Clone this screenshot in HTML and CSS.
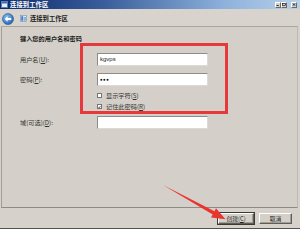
FILE: index.html
```html
<!DOCTYPE html>
<html lang="zh">
<head>
<meta charset="utf-8">
<link rel="stylesheet" href="styles.css">
</head>
<body>
<div class="win">
  <div class="titlebar">
    <svg class="ticon" width="7" height="7" viewBox="0 0 7 7"><rect x="0.5" y="0.5" width="6" height="6" fill="#e8eef8" stroke="#5a7fb8"/><rect x="1" y="1" width="5" height="1.5" fill="#3a6fc0"/></svg>
    <span class="ttext">连接到工作区</span>
    <span class="tbtns">
      <span class="tb"><svg width="5" height="4" viewBox="0 0 5 4"><rect x="0.5" y="3" width="3" height="1" fill="#000"/></svg></span>
      <span class="tb"><svg width="5" height="4" viewBox="0 0 5 4"><rect x="0.5" y="0.5" width="4" height="3" fill="none" stroke="#000" stroke-width="0.8"/></svg></span>
      <span class="tb tb-close"><svg width="5" height="4" viewBox="0 0 5 4"><path d="M0.5 0.3L4.5 3.7M4.5 0.3L0.5 3.7" stroke="#000" stroke-width="0.9"/></svg></span>
    </span>
  </div>
  <div class="nav">
    <svg class="back" width="12" height="12" viewBox="0 0 12 12">
      <defs><radialGradient id="bg" cx="0.4" cy="0.35" r="0.7"><stop offset="0" stop-color="#8cc4f4"/><stop offset="1" stop-color="#1e5fb4"/></radialGradient></defs>
      <circle cx="6" cy="6" r="5.5" fill="url(#bg)" stroke="#2a4f88" stroke-width="0.6"/>
      <path d="M2.6 6L5.6 3.2V4.9H9.2V7.1H5.6V8.8Z" fill="#fff"/>
    </svg>
    <svg class="nicon" width="7" height="7" viewBox="0 0 7 7"><rect x="0.5" y="0.5" width="6" height="6" fill="#dde6f2" stroke="#6f8fb8" stroke-width="0.6"/><rect x="1.2" y="1.2" width="2" height="4.6" fill="#4a80c8"/><rect x="3.8" y="2" width="2.2" height="3.8" fill="#8fb2de"/></svg>
    <span class="ntext">连接到工作区</span>
  </div>
  <div class="panel">
    <div class="heading">键入您的用户名和密码</div>
    <div class="form">
      <div class="row row-user">
        <span class="lbl">用户名(<u>U</u>):</span>
        <div class="input">kgvps</div>
      </div>
      <div class="row row-pass">
        <span class="lbl">密码(<u>P</u>):</span>
        <div class="input pass">●●●</div>
      </div>
      <div class="row row-cb1">
        <span class="lbl"></span>
        <span class="cb"></span><span class="cbtext">显示字符(<u>S</u>)</span>
      </div>
      <div class="row row-cb2">
        <span class="lbl"></span>
        <span class="cb"><svg width="5" height="5" viewBox="0 0 5 5"><path d="M0.8 2.4L2 3.7L4.2 1" fill="none" stroke="#000" stroke-width="1.1"/></svg></span><span class="cbtext">记住此密码(<u>R</u>)</span>
      </div>
      <div class="row row-domain">
        <span class="lbl">域(可选)(<u>D</u>):</span>
        <div class="input"></div>
      </div>
    </div>
  </div>
  <div class="footer">
    <span class="btn btn-default">创建(<u>C</u>)</span>
    <span class="btn">取消</span>
  </div>
  <div class="annot-rect"></div>
  <svg class="annot-arrow" width="300" height="229" viewBox="0 0 300 229">
    <polygon points="163,185 214.5,211.2 216,208.2 225.5,219.3 211,217.4 212.7,214.4" fill="#e8352f"/>
  </svg>
</div>
</body>
</html>
```

FILE: styles.css
```css
* { box-sizing: border-box; }
html, body { margin: 0; padding: 0; }
body {
  width: 300px;
  height: 229px;
  overflow: hidden;
  background: #d4d0c8;
  font-family: "Noto Sans CJK SC", "Liberation Sans", sans-serif;
  font-size: 6.2px;
  color: #222;
}
u { text-decoration: underline; text-underline-offset: 0.5px; }

.win {
  position: relative;
  width: 300px;
  height: 229px;
  display: flex;
  flex-direction: column;
  background: #d6d2cb;
  border-bottom: 1px solid #55534f;
}

.titlebar {
  height: 9px;
  flex: 0 0 9px;
  display: flex;
  align-items: center;
  padding: 0 3px 0 1px;
  background: linear-gradient(to right, #0c2a6c 0%, #3a5e9c 35%, #8eb2dc 75%, #b8d0ea 100%);
}
.ticon { flex: 0 0 auto; margin-right: 2px; }
.ttext {
  color: #fff;
  font-weight: bold;
  font-size: 6.3px;
  line-height: 9px;
  letter-spacing: 0.1px;
}
.tbtns { margin-left: auto; display: flex; gap: 0; }
.tb {
  width: 6px;
  height: 6px;
  display: flex;
  align-items: center;
  justify-content: center;
  background: #d4d0c8;
  border: 1px solid;
  border-color: #fff #6c6a66 #6c6a66 #fff;
}
.tb svg { width: 4px; height: 3px; }
.tb-close { margin-left: 4px; }

.nav {
  height: 17px;
  flex: 0 0 17px;
  display: flex;
  align-items: center;
  padding: 2px 0 0 2px;
  background: #d8d4cd;
}
.back { flex: 0 0 auto; margin-right: 6px; }
.nicon { flex: 0 0 auto; margin-right: 3px; }
.ntext { font-size: 6.3px; font-weight: bold; color: #1e1e1e; line-height: 8px; }

.panel {
  flex: 1 1 auto;
  margin: 0 2px 0 1px;
  border-top: 1px solid #a9a6a0;
  border-left: 1px solid #a19f99;
  border-right: 1px solid #bdbab4;
  border-bottom: 1px solid #8d8b86;
  padding: 8px 0 0 18px;
  background: #d4d0c9;
}
.heading {
  font-weight: bold;
  line-height: 7px;
  color: #1a1a1a;
  font-size: 6.2px;
}
.form { margin-top: 11px; display: flex; flex-direction: column; }
.row { display: flex; align-items: center; }
.lbl { flex: 0 0 77px; line-height: 7px; color: #333; }
.input {
  width: 111px;
  height: 13px;
  background: #fff;
  border: 1px solid;
  border-color: #8e8c88 #dcdad6 #dcdad6 #8e8c88;
  padding-left: 2px;
  font-family: "Liberation Sans", sans-serif;
  font-size: 6px;
  line-height: 11px;
  color: #222;
}
.input.pass { font-size: 4.5px; letter-spacing: 0.4px; color: #111; }
.row-pass { margin-top: 7px; }
.row-cb1 { margin-top: 6px; height: 7px; }
.row-cb2 { margin-top: 4px; height: 7px; }
.row-domain { margin-top: 6px; }
.cb {
  flex: 0 0 5px;
  width: 5px;
  height: 5px;
  background: #fff;
  border: 0.5px solid #77756f;
  margin-right: 4px;
  display: flex;
  align-items: center;
  justify-content: center;
}
.cb svg { width: 4px; height: 4px; }
.cbtext { line-height: 7px; color: #333; }

.footer {
  flex: 0 0 20px;
  height: 20px;
  display: flex;
  justify-content: flex-end;
  align-items: flex-start;
  gap: 5px;
  padding: 5px 8px 0 0;
  background: #d6d2cb;
}
.btn {
  width: 33px;
  height: 11px;
  display: flex;
  align-items: center;
  justify-content: center;
  background: #d4d0c8;
  border: 1px solid;
  border-color: #fff #5f5d59 #5f5d59 #fff;
  box-shadow: inset -1px -1px 0 #a09e98;
  font-size: 5.8px;
  color: #222;
}
.btn-default { width: 36px; outline: 1px solid #3c3a36; }

.annot-rect {
  position: absolute;
  left: 80px;
  top: 43px;
  width: 148px;
  height: 71px;
  border: 3px solid #e6393b;
}
.annot-arrow {
  position: absolute;
  left: 0;
  top: 0;
  pointer-events: none;
}
```
